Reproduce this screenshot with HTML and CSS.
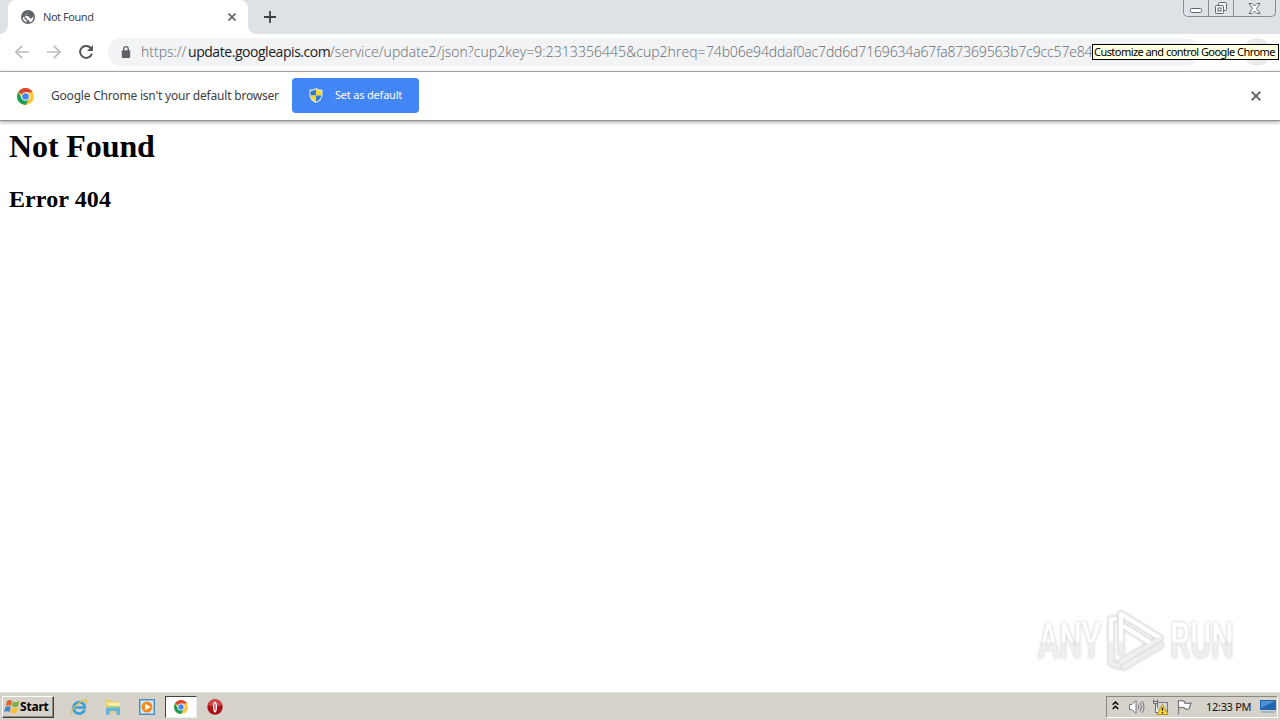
FILE: index.html
```html
<!DOCTYPE html>
<html lang="en">
<head>
    <meta charset="UTF-8">
    <title>Not Found</title>
    <link rel="stylesheet" href="styles.css">
</head>
<body>
    <svg width="0" height="0" class="defs">
        <symbol id="chrome" viewBox="0 0 16 16">
            <circle cx="8" cy="8" r="8" fill="#fbc93d"/>
            <path d="M8 8L1.1 4A8 8 0 0 1 14.9 4.1H8Z" fill="#dd4335"/>
            <path d="M1.1 4A8 8 0 0 0 8 16L11.5 10 8 8 4.6 10Z" fill="#1a9f56"/>
            <circle cx="8" cy="8" r="4" fill="#fff"/>
            <circle cx="8" cy="8" r="3.1" fill="#4285f4"/>
        </symbol>
    </svg>

    <div class="tabstrip">
        <div class="edge"></div>
        <div class="tab">
            <svg width="14" height="14" viewBox="0 0 14 14">
                <circle cx="7" cy="7" r="7" fill="#5f6368"/>
                <path d="M7.5 1.2L6.5 3.2 4.6 4.2 5.2 6 7.6 6.3 8.8 8.2 10.6 8.4 12.3 6.2A5.4 5.4 0 0 1 8.5 12.4L8.2 10.5 6 9.4 5.2 7.7 1.7 7A5.4 5.4 0 0 0 5.8 12.3L5.6 10.6 3 8.2Z" fill="#fff"/>
            </svg>
            <span class="tab-title">Not Found</span>
            <svg class="tab-close" width="8" height="8" viewBox="0 0 8 8"><path d="M.5 .5L7.5 7.5M7.5 .5L.5 7.5" stroke="#5f6368" stroke-width="1.6"/></svg>
        </div>
        <div class="edge edge-right"></div>
        <svg class="new-tab" width="12" height="12" viewBox="0 0 12 12"><path d="M6 0V12M0 6H12" stroke="#3c4043" stroke-width="1.8"/></svg>
        <div class="window-buttons">
            <div class="min"><svg width="13" height="6" viewBox="0 0 13 6"><rect x=".5" y=".5" width="11" height="4" rx="1" fill="#fff" stroke="#63666d"/></svg></div>
            <div class="restore"><svg width="14" height="14" viewBox="0 0 14 14" fill="#f4f5f7" stroke="#63666d"><rect x="4.5" y="1.5" width="8" height="8" rx="1"/><rect x="1.5" y="4.5" width="8" height="8" rx="1"/><rect x="4" y="7" width="3" height="3"/></svg></div>
            <div class="close"><svg width="13" height="11" viewBox="0 0 13 11"><path d="M1 .5H4L6.5 3 9 .5H12L8.5 5.5 12 10.5H9L6.5 8 4 10.5H1L4.5 5.5Z" fill="#fff" stroke="#63666d"/></svg></div>
        </div>
    </div>

    <div class="toolbar">
        <svg width="14" height="14" viewBox="0 0 14 14"><path d="M14 7H1.2M7.2 .8L1 7 7.2 13.2" fill="none" stroke="#babcbe" stroke-width="1.7"/></svg>
        <svg width="14" height="14" viewBox="0 0 14 14"><path d="M0 7H12.8M6.8 .8L13 7 6.8 13.2" fill="none" stroke="#babcbe" stroke-width="1.7"/></svg>
        <svg width="14" height="14" viewBox="0 0 14 14"><path d="M11.7 3A6 6 0 1 0 12.9 8.6" fill="none" stroke="#55595e" stroke-width="2"/><path d="M14 0V6H8Z" fill="#55595e"/></svg>
        <div class="omnibox">
            <svg width="10" height="12" viewBox="0 0 10 12"><rect x=".8" y="4.2" width="8.4" height="7.8" rx="1" fill="#5f6368"/><path d="M2.7 5V3A2.3 2.3 0 0 1 7.3 3V5" fill="none" stroke="#5f6368" stroke-width="1.3"/></svg>
            <div class="url"><span class="scheme">https://</span><span class="host">update.googleapis.com</span><span class="path">/service/update2/json?cup2key=9:2313356445&amp;cup2hreq=</span><span class="hash">74b06e94ddaf0ac7dd6d7169634a67fa87369563b7c9cc57e84</span></div>
        </div>
        <div class="avatar"></div>
        <div class="menu"></div>
        <div class="tooltip">Customize and control Google Chrome</div>
    </div>

    <div class="infobar">
        <svg width="17" height="17"><use href="#chrome"/></svg>
        <span class="info-text">Google Chrome isn't your default browser</span>
        <button class="default-button">
            <svg width="14" height="15" viewBox="0 0 14 15">
                <path d="M7 0Q9.500 2 13.500 1.800V7Q13.500 12 7 15 .5 12 .5 7V1.800Q4.500 2 7 0Z" fill="#e8ecd8"/>
                <path d="M7 1.300Q4.500 3 1.500 2.900V7.500H7Z" fill="#2d7cd0"/>
                <path d="M7 1.300Q9.500 3 12.500 2.900V7.500H7Z" fill="#fbd42d"/>
                <path d="M7 7.500H1.500Q2 11.500 7 13.800Z" fill="#fbd42d"/>
                <path d="M7 7.500H12.500Q12 11.500 7 13.800Z" fill="#2d7cd0"/>
            </svg>
            <span>Set as default</span>
        </button>
        <svg class="info-close" width="10" height="10" viewBox="0 0 10 10"><path d="M.7 .7L9.300 9.300M9.300 .7L.7 9.300" stroke="#66696d" stroke-width="2"/></svg>
    </div>

    <div class="page">
        <h1>Not Found</h1>
        <h2>Error 404</h2>
        <div class="watermark">
            <span class="any">ANY</span>
            <svg width="58" height="64" viewBox="0 0 58 64" fill="none" stroke-linejoin="round" stroke-linecap="round">
                <g stroke="#e6e6e6" stroke-width="6"><path d="M14 43V5L53 29 14 53"/><path d="M8 10H4V54L11 57"/><path d="M18 18L42 33M17 58L54 36"/></g>
                <g stroke="#fff" stroke-width="4"><path d="M14 32V5L53 29"/><path d="M8 10H4V32"/><path d="M18 18L42 33"/></g>
                <g stroke="#efefef" stroke-width="4"><path d="M53 30L14 53M17 58L54 36M14 34V43M4 34V54L11 57"/></g>
            </svg>
            <span class="run">RUN</span>
        </div>
    </div>

    <div class="taskbar">
        <div class="start">
            <svg width="16" height="15" viewBox="0 0 16 15">
                <path d="M3 2Q6 0 8 2L7 7Q4.500 5.500 1.800 7Z" fill="#e8602c"/>
                <path d="M9 2.500Q12 4 15.500 2L14 7.500Q11 9 8 7.300Z" fill="#7db343"/>
                <path d="M1.500 8Q4 6.500 6.800 8L5.500 13Q3 11.500 0 13Z" fill="#4384c9"/>
                <path d="M7.700 8.500Q10.500 10 13.800 8.500L12.500 13.500Q9.500 15 6.500 13.500Z" fill="#f6c02f"/>
            </svg>
            <span>Start</span>
        </div>
        <div class="task ie">
            <svg width="18" height="18" viewBox="0 0 18 18" fill="none">
                <path d="M14.500 11.800A5.700 5.700 0 1 1 14.800 9.500H5" stroke="#35a0dc" stroke-width="2.600"/>
                <path d="M2 16.500Q-.5 14 5 8.500 11 2.500 15 1.800 18 1.600 15.500 5.500" stroke="#e6bd43" stroke-width="1.300"/>
            </svg>
        </div>
        <div class="task">
            <svg width="16" height="16" viewBox="0 0 16 16">
                <path d="M1 1H6L7 2.500H14V14H1Z" fill="#e9cc69"/><path d="M2 3.500H15V10H2Z" fill="#f8eba8"/>
                <path d="M2 7H15V9.500H2Z" fill="#9fd08d"/><path d="M1 9H15V16H11.500V12H4.500V16H1Z" fill="#62b4df"/>
            </svg>
        </div>
        <div class="task">
            <svg width="16" height="16" viewBox="0 0 16 16">
                <rect x=".5" y=".5" width="15" height="15" fill="#8fc1e8" stroke="#4c8abc"/><rect x="2" y="2" width="12" height="12" fill="#d9ecf8"/>
                <circle cx="8" cy="8" r="5.500" fill="#f48a1d"/><path d="M6.200 4.800L11.500 8 6.200 11.200Z" fill="#fff"/>
            </svg>
        </div>
        <div class="task active"><svg width="14" height="14"><use href="#chrome"/></svg></div>
        <div class="task">
            <svg width="16" height="16" viewBox="0 0 16 16"><circle cx="8" cy="8" r="7.700" fill="#a90f17"/><path d="M1 6A7.300 7.300 0 0 1 15 6Q8 9 1 6Z" fill="#d4474b"/><ellipse cx="8" cy="8" rx="2" ry="5.500" fill="#fff"/><ellipse cx="8" cy="8" rx=".6" ry="4" fill="#b7282d"/></svg>
        </div>
        <div class="tray">
            <svg class="chevrons" width="7" height="9" viewBox="0 0 7 9"><path d="M.7 3.700L3.500 1 6.300 3.700M.7 8L3.500 5.300 6.300 8" fill="none" stroke="#000" stroke-width="1.500"/></svg>
            <svg class="speaker" width="17" height="16" viewBox="0 0 17 16" fill="none" stroke="#75767b"><path d="M1.500 5.500H4L8 1.500V14.500L4 10.500H1.500Z" fill="#fff"/><path d="M10 5.500Q11.500 8 10 10.500M12 3.500Q15 8 12 12.500M14 2Q18 8 14 14"/></svg>
            <svg class="network" width="17" height="16" viewBox="0 0 17 16"><rect x="5.500" y="3.500" width="10" height="9" fill="#d2d5da" stroke="#777"/><path d="M1.500 .5V4.500H3.500V13.500H7M5.500 .5V4.500H3.500M1.500 2.500H5.500" fill="#fff" stroke="#666"/><path d="M10.500 5.500L16 15.500H5Z" fill="#ffd92e" stroke="#b99418"/><path d="M10.500 8.500V12M10.500 13V14.500" stroke="#222" stroke-width="1.300"/></svg>
            <svg class="flag" width="16" height="16" viewBox="0 0 16 16"><path d="M2.500 1V15.500M2.500 2Q6 1 8.500 2.500V4Q11 5 15 4L13 10Q10 11 7.500 8.500 5 8 2.500 9" fill="#fff" stroke="#77797e" stroke-width="1.200"/></svg>
            <span class="clock">12:33 PM</span>
            <svg class="desktop" width="16" height="13" viewBox="0 0 16 13"><rect width="16" height="10" fill="#2366ad"/><path d="M1 1H15L1 8Z" fill="#4c93d4"/><path d="M1 11H15L14 13H2Z" fill="#9eb4c7"/></svg>
        </div>
    </div>
</body>
</html>
```
FILE: styles.css
```css
* {
    box-sizing: border-box;
}
body {
    margin: 0;
    width: 1280px;
    height: 720px;
    display: flex;
    flex-direction: column;
    overflow: hidden;
    background: #fff;
    font-family: "Noto Sans", sans-serif;
    white-space: nowrap;
}
svg {
    display: block;
    flex: none;
}
.defs {
    position: absolute;
}

/* tabs */
.tabstrip {
    height: 34px;
    flex: none;
    display: flex;
    background: #dee1e6;
}
.edge {
    width: 8px;
    background: radial-gradient(circle at 0 26px, #dee1e6 7.5px, #fff 8px);
    clip-path: inset(26px 0 0 0);
}
.edge-right {
    background: radial-gradient(circle at 8px 26px, #dee1e6 7.5px, #fff 8px);
}
.tab {
    width: 240px;
    display: flex;
    align-items: center;
    padding: 0 12px 0 13px;
    background: #fff;
    border-radius: 8px 8px 0 0;
}
.tab-title {
    margin: -2px 0 0 8px;
    font-size: 11px;
    letter-spacing: -0.45px;
    color: #45484c;
}
.tab-close {
    margin-left: auto;
}
.new-tab {
    margin: 11px 0 0 8px;
}
.window-buttons {
    display: flex;
    height: 17px;
    width: 93px;
    margin: 0 4px 0 auto;
    border: 1px solid #888c95;
    border-top: none;
    border-radius: 0 0 5px 5px;
}
.window-buttons div {
    display: flex;
    justify-content: center;
    padding-top: 3px;
}
.min {
    width: 25px;
    border-right: 1px solid #888c95;
}
.min svg {
    margin-top: 5px;
}
.restore {
    width: 25px;
    border-right: 1px solid #888c95;
}
.restore svg {
    margin-top: -2px;
}
.close {
    flex: 1;
}

/* toolbar */
.toolbar {
    position: relative;
    height: 38px;
    flex: none;
    display: flex;
    align-items: center;
    gap: 18px;
    padding: 0 9px 2px 15px;
    border-bottom: 1px solid #b4b6ba;
}
.omnibox {
    width: 1092px;
    height: 28px;
    margin-left: -3px;
    display: flex;
    align-items: center;
    padding-left: 13px;
    border-radius: 14px;
    background: #f1f3f4;
}
.url {
    display: flex;
    margin-left: 10px;
    font-family: "Open Sans", sans-serif;
    font-size: 14px;
    font-weight: 300;
    color: #65696e;
}
.scheme {
    width: 47px;
}
.host {
    width: 142px;
    color: #202124;
    font-weight: 400;
    letter-spacing: -0.45px;
}
.path {
    width: 376px;
    letter-spacing: 0.05px;
}
.hash {
    letter-spacing: -0.15px;
}
.avatar {
    width: 16px;
    height: 16px;
    border-radius: 50%;
    background: #aaadb0;
}
.menu {
    width: 28px;
    height: 28px;
    margin-left: -8px;
    border-radius: 50%;
    background: #ebebec;
}
.tooltip {
    position: absolute;
    left: 1092px;
    top: 10px;
    width: 187px;
    height: 16px;
    padding-left: 1px;
    border: 1px solid #000;
    background: #ffffe1;
    font-size: 11px;
    line-height: 14px;
    letter-spacing: -0.55px;
    color: #000;
}

/* default browser bar */
.infobar {
    position: relative;
    height: 49px;
    flex: none;
    display: flex;
    align-items: center;
    padding: 0 19px 0 17px;
    border-bottom: 1px solid #929292;
    box-shadow: 0 1px 4px rgba(0, 0, 0, 0.4);
    background: #fff;
}
.info-text {
    width: 229px;
    margin: -2px 0 0 17px;
    font-size: 12px;
    letter-spacing: -0.2px;
    color: #3c4043;
}
.default-button {
    width: 127px;
    height: 35px;
    margin: -2px 0 0 12px;
    display: flex;
    align-items: center;
    padding: 0 0 0 17px;
    border: none;
    border-radius: 4px;
    background: #4285f4;
    color: #fff;
    font-family: "Noto Sans", sans-serif;
    font-size: 11px;
    letter-spacing: -0.2px;
}
.default-button span {
    margin: -2px 0 0 12px;
}
.info-close {
    margin-left: auto;
}

/* page */
.page {
    position: relative;
    flex: 1;
    padding: 7px 9px;
    font-family: "Liberation Serif", serif;
    color: #000;
}
h1 {
    margin: 0;
    font-size: 32px;
    line-height: 36px;
    letter-spacing: -0.1px;
}
h2 {
    margin: 21px 0 0;
    font-size: 24px;
    line-height: 28px;
    font-weight: 700;
    letter-spacing: 0.1px;
}
.watermark {
    position: absolute;
    left: 1038px;
    top: 488px;
    display: flex;
    align-items: center;
    font-family: Roboto, sans-serif;
    font-size: 50px;
    font-weight: 500;
    line-height: 64px;
    filter: drop-shadow(0 0 1.5px #c4c4c4);
}
.watermark span {
    width: 98px;
    margin-right: -35px;
    transform: scaleX(0.64);
    transform-origin: left;
    color: transparent;
    background: linear-gradient(#fff 52%, #efefef 52%);
    -webkit-background-clip: text;
    background-clip: text;
}
.watermark svg {
    margin: 0 5px 0 6px;
}

/* taskbar */
.taskbar {
    height: 28px;
    flex: none;
    display: flex;
    align-items: center;
    padding: 0 2px 0 2px;
    background: #d6d2ca;
    border-top: 1px solid #e3e0d9;
}
.start {
    width: 52px;
    height: 22px;
    margin-right: 9px;
    display: flex;
    align-items: center;
    padding-left: 1px;
    border: 1px solid;
    border-color: #fff #404040 #404040 #fff;
    box-shadow: inset -1px -1px 0 #8d8a84;
    font-size: 12px;
    font-weight: 700;
    letter-spacing: -0.2px;
    color: #000;
}
.task {
    width: 32px;
    height: 22px;
    margin-right: 2px;
    display: flex;
    align-items: center;
    justify-content: center;
}
.active {
    background: #fff;
    border: 1px solid;
    border-color: #404040 #eee #eee #404040;
}
.tray {
    width: 172px;
    height: 22px;
    margin-left: auto;
    display: flex;
    align-items: center;
    padding-left: 5px;
    border: 1px solid;
    border-color: #8b8882 #fff #fff #8b8882;
}
.chevrons {
    margin-top: -3px;
}
.speaker {
    margin-left: 9px;
}
.network {
    margin-left: 7px;
}
.flag {
    margin-left: 7px;
}
.clock {
    width: 46px;
    margin-left: 14px;
    font-size: 11px;
    letter-spacing: -0.3px;
    color: #111;
}
.desktop {
    margin-left: 8px;
}
```
